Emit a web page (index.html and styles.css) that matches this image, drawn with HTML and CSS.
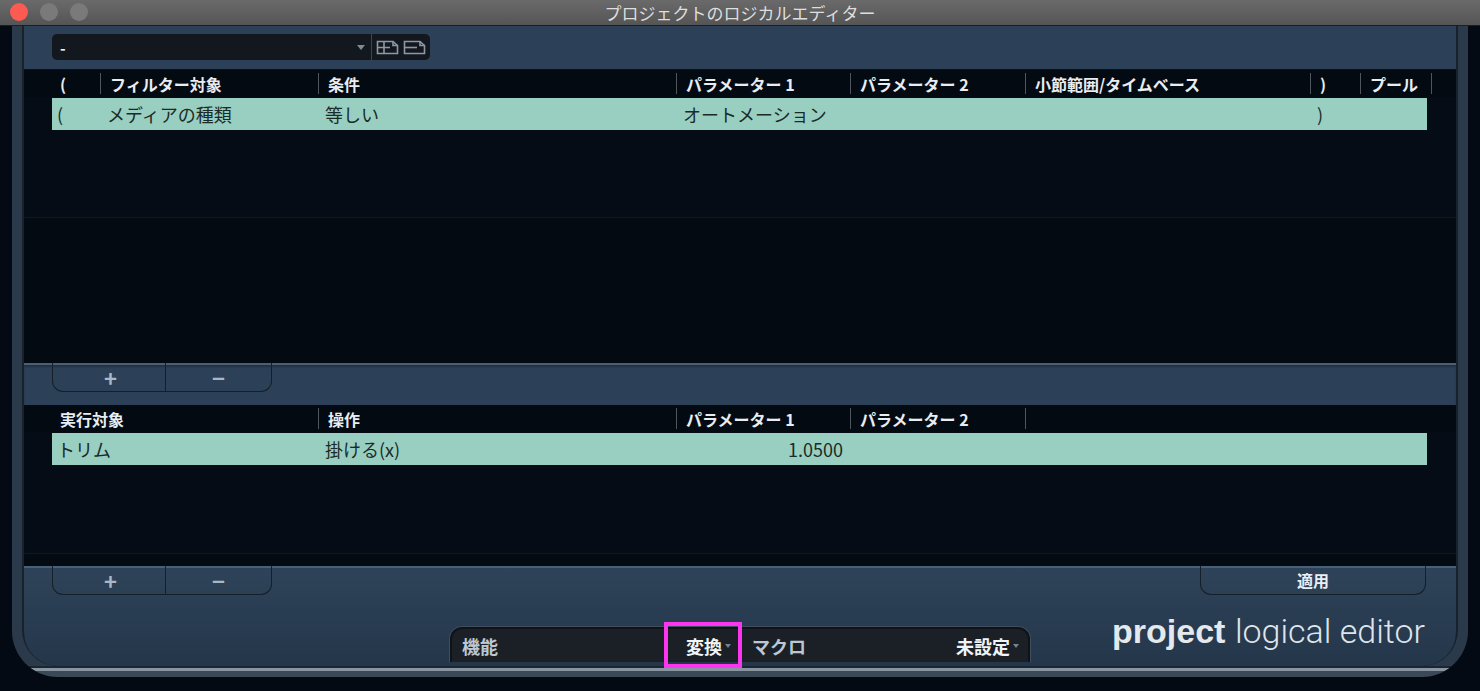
FILE: index.html
```html
<!DOCTYPE html>
<html lang="ja">
<head>
    <meta charset="UTF-8">
    <title>プロジェクトのロジカルエディター</title>
    <link rel="stylesheet" href="styles.css">
</head>
<body>
    <div class="window">
        <header class="titlebar">
            <div class="lights">
                <span class="light close"></span>
                <span class="light"></span>
                <span class="light"></span>
            </div>
            <div class="title">プロジェクトのロジカルエディター</div>
        </header>

        <div class="frame">
            <div class="bezel">
                <div class="panel">
                    <!-- preset selector -->
                    <div class="toolbar">
                        <div class="preset">
                            <div class="preset-name">-</div>
                            <span class="caret"></span>
                            <div class="preset-tools">
                                <button class="tool" title="プリセットを保存">
                                    <svg width="24" height="16" viewBox="0 0 24 16">
                                        <path d="M1.5 2.5 H17 L21.5 6.5 V14.5 H1.5 Z" />
                                        <path d="M17 2.5 V6.5 H21.5" />
                                        <path d="M1.5 8.5 H14 M8 3 V14" />
                                    </svg>
                                </button>
                                <button class="tool" title="プリセットを削除">
                                    <svg width="24" height="16" viewBox="0 0 24 16">
                                        <path d="M1.5 2.5 H17 L21.5 6.5 V14.5 H1.5 Z" />
                                        <path d="M17 2.5 V6.5 H21.5" />
                                        <path d="M1.5 8.5 H14" />
                                    </svg>
                                </button>
                            </div>
                        </div>
                    </div>

                    <!-- filter conditions -->
                    <section class="table filter">
                        <div class="head">
                            <div class="cell first">(</div>
                            <div class="cell">フィルター対象</div>
                            <div class="cell">条件</div>
                            <div class="cell">パラメーター 1</div>
                            <div class="cell">パラメーター 2</div>
                            <div class="cell">小節範囲/タイムベース</div>
                            <div class="cell">)</div>
                            <div class="cell last">プール</div>
                        </div>
                        <div class="list">
                            <div class="row">
                                <div class="cell first">(</div>
                                <div class="cell">メディアの種類</div>
                                <div class="cell">等しい</div>
                                <div class="cell">オートメーション</div>
                                <div class="cell"></div>
                                <div class="cell"></div>
                                <div class="cell">)</div>
                                <div class="cell"></div>
                            </div>
                        </div>
                    </section>

                    <div class="bar">
                        <div class="tabs">
                            <button class="tab add">+</button>
                            <button class="tab remove">−</button>
                        </div>
                    </div>

                    <!-- actions -->
                    <section class="table action">
                        <div class="head">
                            <div class="cell first">実行対象</div>
                            <div class="cell">操作</div>
                            <div class="cell">パラメーター 1</div>
                            <div class="cell">パラメーター 2</div>
                            <div class="cell"></div>
                        </div>
                        <div class="list">
                            <div class="row">
                                <div class="cell first">トリム</div>
                                <div class="cell">掛ける(x)</div>
                                <div class="cell num">1.0500</div>
                                <div class="cell"></div>
                                <div class="cell"></div>
                            </div>
                        </div>
                    </section>

                    <div class="footer">
                        <div class="bar-row">
                            <div class="tabs">
                                <button class="tab add">+</button>
                                <button class="tab remove">−</button>
                            </div>
                            <button class="tab apply">適用</button>
                        </div>
                        <div class="bottom">
                            <div></div>
                            <div class="modebar">
                                <div class="seg">
                                    <span class="label">機能</span>
                                    <span class="value hl">変換<i class="arrow"></i></span>
                                </div>
                                <div class="seg">
                                    <span class="label">マクロ</span>
                                    <span class="value">未設定<i class="arrow"></i></span>
                                </div>
                            </div>
                            <div class="logo"><b>project</b> <span class="thin">logical editor</span></div>
                        </div>
                    </div>
                </div>
            </div>
        </div>
    </div>
</body>
</html>
```

FILE: styles.css
```css
:root {
    --win-bg: #030a13;
    --bezel: #2a3a4a;
    --panel: #2c4157;
    --panel-light: #4a6076;
    --table-bg: #040a12;
    --sep: #4f565e;
    --row-bg: #99cfc1;
    --row-text: #1a2b28;
    --head-text: #e8edf1;
    --tab-line: #151f2a;
    --ui-font: "Noto Sans CJK JP", "Noto Sans", sans-serif;
}

* {
    box-sizing: border-box;
    margin: 0;
    padding: 0;
}

body {
    background: var(--win-bg);
    font-family: var(--ui-font);
}

button {
    font-family: inherit;
    border: none;
    background: none;
    color: inherit;
    cursor: pointer;
}

.window {
    width: 1480px;
    height: 691px;
    display: flex;
    flex-direction: column;
    overflow: hidden;
}

/* title bar */
.titlebar {
    height: 26px;
    flex: none;
    position: relative;
    display: flex;
    align-items: center;
    justify-content: center;
    background: linear-gradient(#6a6a6a, #555555);
    border-bottom: 1px solid #1d1d1d;
}

.lights {
    position: absolute;
    left: 10px;
    top: 3px;
    display: flex;
    gap: 12px;
}

.light {
    width: 18px;
    height: 18px;
    border-radius: 50%;
    background: #7a7a7a;
}

.light.close {
    background: #fd5a52;
}

.title {
    color: #dedede;
    font-size: 17px;
    line-height: 1;
}

/* outer frame */
.frame {
    flex: 1;
    padding: 0 12px 14px;
}

.bezel {
    height: 100%;
    padding: 0 10px 11px;
    border-radius: 0 0 46px 46px;
    background: linear-gradient(to bottom,
        var(--bezel) 0, var(--bezel) calc(100% - 11px),
        #1a2632 calc(100% - 11px), #1a2632 calc(100% - 9px),
        #8996a2 calc(100% - 9px), #8996a2 calc(100% - 6px),
        #3b4956 calc(100% - 6px));
}

.panel {
    height: 100%;
    display: flex;
    flex-direction: column;
    border-left: 2px solid #17222d;
    border-right: 2px solid #17222d;
    border-radius: 0 0 36px 36px;
    background: var(--table-bg);
}

/* preset toolbar */
.toolbar {
    height: 44px;
    flex: none;
    background: var(--panel);
    padding: 8px 0 0 28px;
    border-bottom: 1px solid #0b121a;
}

.preset {
    width: 378px;
    height: 26px;
    display: flex;
    align-items: center;
    background: #13181e;
    border-radius: 5px;
}

.preset-name {
    flex: 1;
    color: #f1f4f6;
    font-weight: 700;
    font-size: 15px;
    padding-left: 8px;
}

.caret {
    width: 0;
    height: 0;
    border-left: 4px solid transparent;
    border-right: 4px solid transparent;
    border-top: 5px solid #7f8b97;
    margin-right: 6px;
}

.preset-tools {
    height: 100%;
    display: flex;
    align-items: center;
    gap: 3px;
    padding: 0 3px 0 4px;
    border-left: 1px solid #3c4652;
}

.tool {
    display: flex;
}

.tool svg {
    fill: none;
    stroke: #8c99a5;
    stroke-width: 1.6;
}

/* tables */
.table {
    background: var(--table-bg);
    padding: 0 0 0 28px;
}

.filter {
    height: 293px;
    flex: none;
}

.action {
    height: 161px;
    flex: none;
}

.filter .head {
    display: grid;
    grid-template-columns: 48px 218px 358px 174px 175px 285px 50px 72px;
}

.filter .row {
    display: grid;
    grid-template-columns: 48px 218px 358px 174px 175px 285px 50px 67px;
}

.action .head,
.action .row {
    display: grid;
    grid-template-columns: 266px 358px 174px 175px 402px;
}

.head {
    height: 27px;
    align-items: center;
}

.head .cell {
    height: 21px;
    display: flex;
    align-items: center;
    padding-left: 9px;
    border-left: 1.5px solid var(--sep);
    color: var(--head-text);
    font-size: 16px;
    font-weight: 700;
    white-space: nowrap;
}

.head .cell.first {
    border-left: none;
    padding-left: 8px;
}

.head .cell.last {
    border-right: 1.5px solid var(--sep);
}

.list {
    border-bottom: 1px solid #0e1722;
    margin-left: -28px;
    padding: 1px 0 0 28px;
    background: #050c15;
}

.filter .list {
    height: 121px;
}

.action .list {
    height: 122px;
}

.row {
    width: 1375px;
    height: 32px;
    align-items: center;
    background: var(--row-bg);
}

.row .cell {
    padding-left: 7px;
    color: var(--row-text);
    font-size: 18px;
    white-space: nowrap;
}

.row .cell.first {
    padding-left: 5px;
}

.row .cell.num {
    text-align: right;
    padding-right: 7px;
}

/* button bars */
.bar {
    height: 42px;
    flex: none;
    background: var(--panel);
    border-top: 2px solid var(--panel-light);
    padding-left: 28px;
    box-shadow: inset 0 2px 2px rgba(0, 0, 0, 0.25);
}

.tabs {
    display: flex;
    width: 220px;
    height: 29px;
    margin-top: -2px;
    border: 1px solid var(--tab-line);
    border-top: none;
    border-radius: 0 0 11px 11px;
}

.tab {
    height: 100%;
    color: #a9b8c6;
    font-size: 22px;
    font-weight: 700;
    line-height: 1;
}

.tab.add {
    width: 113px;
    padding-left: 3px;
    border-right: 1px solid var(--tab-line);
}

.tab.remove {
    flex: 1;
}

.footer {
    flex: 1;
    display: flex;
    flex-direction: column;
    background: linear-gradient(#2e4359, #24364a);
    border-top: 2px solid var(--panel-light);
    border-radius: 0 0 34px 34px;
}

.bar-row {
    display: flex;
    justify-content: space-between;
    padding: 0 30px 0 28px;
}

.tab.apply {
    width: 226px;
    height: 29px;
    margin-top: -2px;
    font-size: 16px;
    color: #e9eef2;
    border: 1px solid var(--tab-line);
    border-top: none;
    border-radius: 0 0 11px 11px;
}

.bottom {
    flex: 1;
    display: grid;
    grid-template-columns: 1fr auto 1fr;
    align-items: end;
}

/* mode selector */
.modebar {
    display: flex;
    gap: 2px;
    height: 36px;
    margin-bottom: 4px;
    padding: 2px 2px 0;
    background: #0f1317;
    border: 1px solid #3e4e5e;
    border-bottom: none;
    border-radius: 13px 13px 0 0;
}

.seg {
    display: flex;
    align-items: center;
    justify-content: space-between;
    background: #1b2026;
    font-size: 18px;
    font-weight: 700;
}

.seg:first-child {
    width: 288px;
    padding: 0 9px 0 10px;
    border-radius: 10px 0 0 0;
}

.seg:last-child {
    width: 286px;
    padding: 0 9px 0 10px;
    border-radius: 0 10px 0 0;
}

.label {
    color: #bcc7d1;
}

.value {
    color: #f1f4f6;
    display: flex;
    align-items: center;
    gap: 3px;
}

.arrow {
    width: 0;
    height: 0;
    border-left: 3.5px solid transparent;
    border-right: 3.5px solid transparent;
    border-top: 4px solid #76828e;
}

.hl {
    position: relative;
}

.hl::after {
    content: "";
    position: absolute;
    left: -22px;
    right: -11px;
    top: -11px;
    bottom: -9px;
    border: 4px solid #fc35ee;
}

.logo {
    justify-self: end;
    padding: 0 31px 18px 0;
    color: #e4e9ed;
    font-family: "Liberation Sans", sans-serif;
    font-size: 34px;
    line-height: 1;
    white-space: nowrap;
}

.logo b {
    font-weight: 700;
}

.logo .thin {
    font-family: Roboto, "Liberation Sans", sans-serif;
    font-weight: 300;
    color: #dfe5ea;
}
```
